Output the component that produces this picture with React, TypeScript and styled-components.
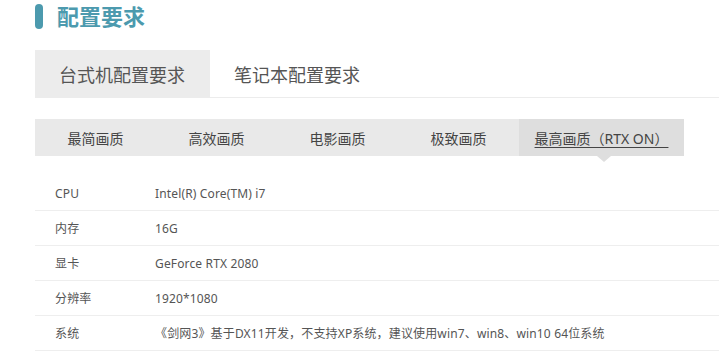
import React, { useState } from "react";
import styled, { createGlobalStyle } from "styled-components";

const GlobalStyle = createGlobalStyle`
  html, body {
    margin: 0;
    padding: 0;
    background: #fff;
  }
  body {
    font-family: "Microsoft YaHei", "Noto Sans", "Noto Sans CJK SC", sans-serif;
    overflow: hidden;
  }
`;

const Page = styled.div`
  width: 719px;
  height: 357px;
  padding-left: 35px;
  box-sizing: border-box;
  overflow: hidden;
`;

const Heading = styled.div`
  display: flex;
  align-items: center;
  gap: 14px;
  height: 32px;
`;

const HeadingBar = styled.span`
  display: block;
  width: 8px;
  height: 25px;
  border-radius: 4px;
  background: #4c9aae;
`;

const HeadingText = styled.h2`
  margin: 0;
  font-size: 22px;
  font-weight: 700;
  color: #4c9aae;
  line-height: 32px;
`;

const MainTabs = styled.div`
  display: flex;
  margin-top: 18px;
  height: 47px;
  border-bottom: 1px solid #ececec;
`;

const MainTab = styled.div<{ $active?: boolean }>`
  display: flex;
  align-items: center;
  padding: 0 25px 0 24px;
  height: 47px;
  font-size: 18px;
  color: #555;
  background: ${(p) => (p.$active ? "#ececec" : "transparent")};
  cursor: pointer;
`;

const SubTabs = styled.div`
  display: flex;
  margin-top: 21px;
  width: 649px;
  height: 37px;
  background: #e9e9e9;
`;

const SubTab = styled.div<{ $active?: boolean }>`
  position: relative;
  display: flex;
  align-items: center;
  justify-content: center;
  min-width: 121px;
  padding: 0 14px;
  box-sizing: border-box;
  flex: ${(p) => (p.$active ? "1 1 auto" : "0 0 121px")};
  font-size: 14px;
  color: #444;
  background: ${(p) => (p.$active ? "#dedede" : "transparent")};
  text-decoration: ${(p) => (p.$active ? "underline" : "none")};
  text-underline-offset: 3px;
  cursor: pointer;

  &::after {
    content: "";
    display: ${(p) => (p.$active ? "block" : "none")};
    position: absolute;
    left: 50%;
    bottom: -6px;
    margin-left: -5px;
    border-left: 7px solid transparent;
    border-right: 7px solid transparent;
    border-top: 6px solid #dedede;
  }
`;

const Spec = styled.div`
  margin-top: 20px;
`;

const SpecRow = styled.div`
  display: flex;
  align-items: center;
  height: 34px;
  border-bottom: 1px solid #eeeeee;
  font-size: 12px;
  letter-spacing: 0.15px;
  color: #555;
`;

const SpecLabel = styled.span`
  padding-left: 20px;
  box-sizing: border-box;
  flex: 0 0 120px;
`;

const SpecValue = styled.span`
  white-space: nowrap;
`;

const qualities = ["最简画质", "高效画质", "电影画质", "极致画质", "最高画质（RTX ON）"];

const specs: [string, string][] = [
  ["CPU", "Intel(R) Core(TM) i7"],
  ["内存", "16G"],
  ["显卡", "GeForce RTX 2080"],
  ["分辨率", "1920*1080"],
  ["系统", "《剑网3》基于DX11开发，不支持XP系统，建议使用win7、win8、win10 64位系统"],
];

export default function App() {
  const [platform, setPlatform] = useState(0);
  const [quality, setQuality] = useState(4);

  return (
    <>
      <GlobalStyle />
      <Page>
        <Heading>
          <HeadingBar />
          <HeadingText>配置要求</HeadingText>
        </Heading>
        <MainTabs>
          {["台式机配置要求", "笔记本配置要求"].map((t, i) => (
            <MainTab key={t} $active={platform === i} onClick={() => setPlatform(i)}>
              {t}
            </MainTab>
          ))}
        </MainTabs>
        <SubTabs>
          {qualities.map((q, i) => (
            <SubTab key={q} $active={quality === i} onClick={() => setQuality(i)}>
              {q}
            </SubTab>
          ))}
        </SubTabs>
        <Spec>
          {specs.map(([k, v]) => (
            <SpecRow key={k}>
              <SpecLabel>{k}</SpecLabel>
              <SpecValue>{v}</SpecValue>
            </SpecRow>
          ))}
        </Spec>
      </Page>
    </>
  );
}
